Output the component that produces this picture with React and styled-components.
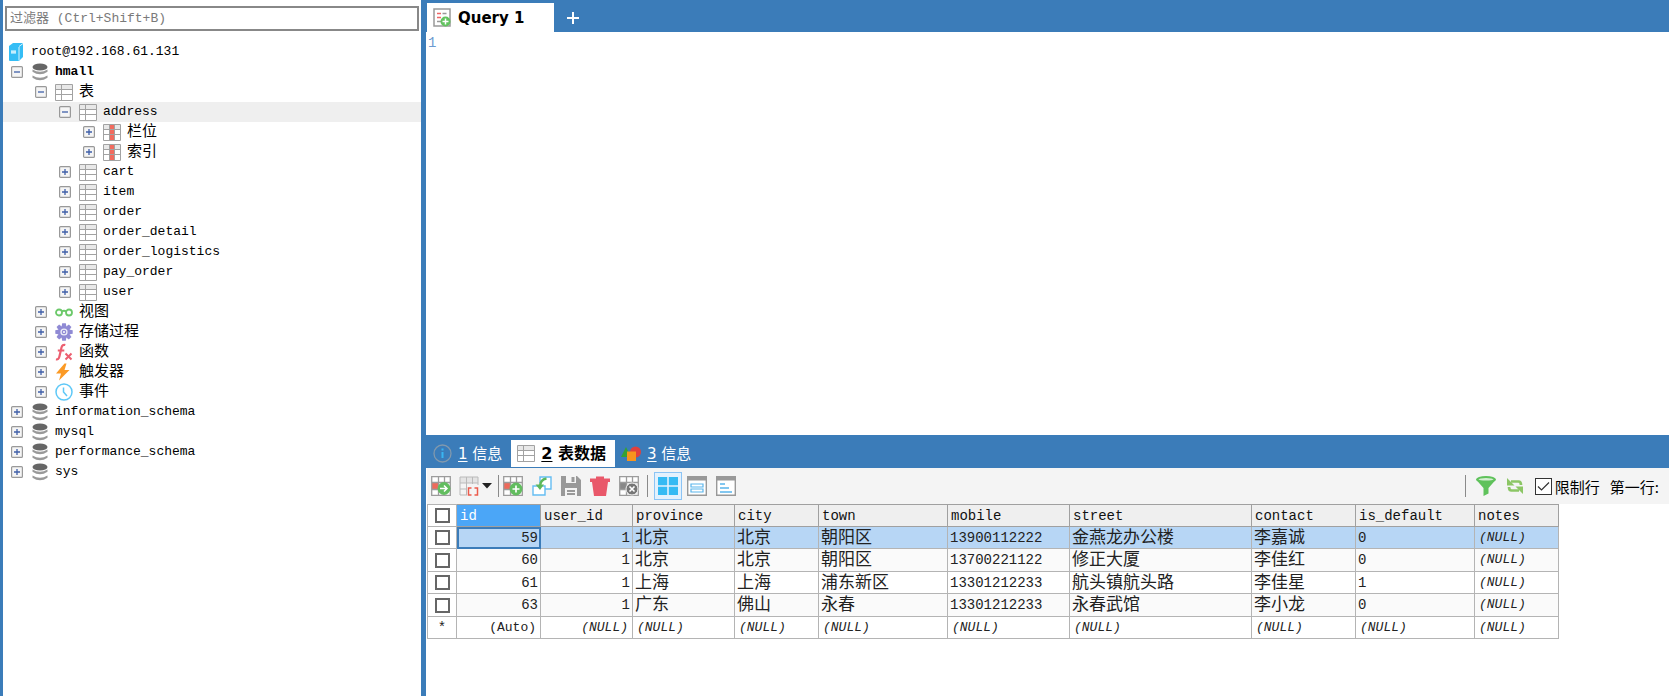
import React from 'react'
import styled, { createGlobalStyle, css } from 'styled-components'

const blue = '#3b7cb9'
const mono = "'Liberation Mono', 'Noto Sans CJK SC', monospace"
const sans = "'DejaVu Sans', 'Noto Sans CJK SC', sans-serif"

const GlobalStyle = createGlobalStyle`
  * {
    box-sizing: border-box;
  }
  body {
    margin: 0;
    color: #000;
    background: #fff;
    font-family: ${mono};
  }
  button {
    margin: 0;
    padding: 0;
    border: 0;
    background: none;
    color: inherit;
    font: inherit;
  }
`

const Root = styled.div`
  display: flex;
  height: 100vh;
  overflow: hidden;
`

/* object browser */

const Sidebar = styled.aside`
  flex: none;
  width: 426px;
  border-left: 3px solid ${blue};
  border-right: 5px solid ${blue};
`

const FilterInput = styled.input`
  display: block;
  width: calc(100% - 4px);
  height: 25px;
  margin: 6px 2px 11px;
  padding: 0 3px;
  border: 2px solid #888;
  outline: none;
  font-family: ${mono};
  font-size: 13px;

  &::placeholder {
    color: #7a7a7a;
    opacity: 1;
  }
`

const Tree = styled.ul`
  margin: 0;
  padding: 0;
  list-style: none;
`

const TreeRow = styled.li`
  display: flex;
  align-items: center;
  height: 20px;
  padding-left: ${p => (p.$root ? 3 : 8 + p.$level * 24)}px;
  background: ${p => (p.$selected ? '#efefef' : 'transparent')};
`

const Toggle = styled.button`
  display: flex;
  width: 12px;
  height: 12px;
  margin-right: 7px;
`

const TreeIcon = styled.span`
  display: flex;
  justify-content: center;
  width: 20px;
  margin-right: 5px;
`

const TreeName = styled.span`
  padding-top: ${p => (p.$cjk ? 2 : 0)}px;
  font-size: ${p => (p.$cjk ? 15 : 13)}px;
  font-weight: ${p => (p.$bold ? 700 : 400)};
  line-height: 20px;
`

/* query and result panes */

const Main = styled.main`
  display: flex;
  flex: 1;
  flex-direction: column;
  min-width: 0;
  padding-left: 1px;
`

const TabBar = styled.div`
  display: flex;
  align-items: flex-end;
  flex: none;
  margin-left: -1px;
  padding: ${p => (p.$result ? '5px 0 1px 1px' : '3px 0 0 1px')};
  background: ${blue};
  font-family: ${sans};
`

const Tab = styled.button`
  display: flex;
  align-items: center;
  gap: 6px;
  height: ${p => (p.$tall ? 29 : 27)}px;
  padding: 0 8px 0 6px;
  color: #fff;
  font-size: 15px;
  line-height: 20px;

  ${p =>
    p.$active &&
    css`
      background: #fff;
      color: #000;
      font-weight: 700;
    `}

  u {
    text-underline-offset: 2px;
  }
`

const QueryTab = styled(Tab)`
  width: 127px;
  gap: 7px;
`

const ResultTab = styled(Tab)`
  padding-right: 9px;
  font-size: ${p => (p.$active ? 16 : 15)}px;
`

const AddTab = styled.button`
  display: flex;
  margin: 0 0 7px 12px;
`

const Editor = styled.div`
  display: flex;
  flex: 1;
  min-height: 0;
`

const LineNumber = styled.span`
  padding: 1px;
  color: #6c9ad0;
  font-size: 14px;
  line-height: 20px;
`

const SqlArea = styled.textarea`
  flex: 1;
  padding: 1px 2px;
  border: 0;
  outline: none;
  resize: none;
  font-family: ${mono};
  font-size: 14px;
  line-height: 20px;
`

const Toolbar = styled.div`
  display: flex;
  align-items: center;
  flex: none;
  height: 36px;
  padding-right: 10px;
  background: #f4f4f4;
  font-family: 'Noto Sans CJK SC', sans-serif;
  font-size: 15px;
`

const ToolButton = styled.button`
  display: flex;
  align-items: center;
  justify-content: center;
  width: 28px;
  height: 28px;
  margin-right: 1px;
  border: 1px solid ${p => (p.$active ? '#8cc4f5' : 'transparent')};
  background: ${p => (p.$active ? '#e3f1fd' : 'transparent')};
`

const MenuButton = styled(ToolButton)`
  width: 38px;
  gap: 3px;
`

const Separator = styled.span`
  width: 1px;
  height: 22px;
  margin: 0 ${p => (p.$wide ? 6 : 0)}px 0 3px;
  background: #8a8a8a;
`

const Spacer = styled.span`
  flex: 1;
`

const LimitLabel = styled.label`
  display: flex;
  align-items: center;
  gap: 3px;
  margin: 0 10px 0 5px;
`

const LimitBox = styled.input`
  width: 17px;
  height: 17px;
  margin: 0;
  border: 1px solid #333;
  appearance: none;
  background: #fff
    url("data:image/svg+xml,%3Csvg xmlns='http://www.w3.org/2000/svg' viewBox='0 0 15 15'%3E%3Cpath d='M2 7.5l3.5 3.5L13 3.5' fill='none' stroke='%23333' stroke-width='1.2'/%3E%3C/svg%3E");
`

const GridWrap = styled.div`
  flex: none;
  min-height: 192px;
  overflow: hidden;
`

const Grid = styled.table`
  width: 1131px;
  table-layout: fixed;
  border-collapse: collapse;
  font-size: 15px;
  line-height: 18px;
`

const HeadCell = styled.th`
  height: 22px;
  padding: 0 3px;
  border: 1px solid #a0a0a0;
  background: ${p => (p.$active ? '#4ba6f7' : '#efefef')};
  color: ${p => (p.$active ? '#fff' : '#111')};
  font-size: 14px;
  font-weight: 400;
  text-align: left;
`

const Cell = styled.td`
  padding: ${p => (p.$cjk ? '2px 2px 0' : '0 2px')};
  border: 1px solid #b4b4b4;
  color: #222;
  font-size: ${p => (p.$cjk ? 17 : 14)}px;
  text-align: ${p => (p.$right ? 'right' : 'left')};
  white-space: nowrap;

  ${p =>
    p.$focused &&
    css`
      outline: 2px solid ${blue};
      outline-offset: -2px;
    `}
`

const CheckCell = styled(Cell)`
  padding: 0;
  background: #fff;
  text-align: center;
`

const EmptyCell = styled(Cell)`
  padding: 0 4px;
  font-size: 13px;
  font-style: ${p => (p.$plain ? 'normal' : 'italic')};
`

const Row = styled.tr`
  height: 22px;
  background: ${p => (p.$selected ? '#b7d6f5' : '#fff')};

  &:nth-child(even) {
    height: 23px;
    background: #fafafa;
  }
`

const NewRow = styled(Row)`
  &&:nth-child(n) {
    background: #fff;
  }
`

const CheckBox = styled.input`
  display: block;
  width: 15px;
  height: 15px;
  margin: 0 auto;
  border: 2px solid #666;
  appearance: none;
  background: #fff;
`

/* icons */

const ToggleIcon = ({ open }) => (
  <svg width="12" height="12" viewBox="0 0 12 12">
    <rect x=".6" y=".6" width="10.800" height="10.800" rx="1" fill="#f5f5f5" stroke="#999" strokeWidth="1.200" />
    <path d={open ? 'M3 6h6' : 'M3 6h6M6 3v6'} stroke="#3f5fa8" strokeWidth="1.300" />
  </svg>
)

const ServerIcon = () => (
  <svg width="16" height="20" viewBox="0 0 16 20">
    <path d="M1 4l4-3h10v14l-4 4H2q-1 0-1-1z" fill="#34bdf5" />
    <path d="M11 4.500l4-3M11 5v13.500" stroke="#d9f3fd" strokeWidth="1" />
    <path d="M3 8h5v4H3z" fill="#8eddfb" />
    <path d="M3 10h5" stroke="#fff" />
  </svg>
)

const DatabaseIcon = () => (
  <svg width="16" height="18" viewBox="0 0 16 18">
    <ellipse cx="8" cy="4" rx="7.500" ry="3.600" fill="#666" />
    <path d="M.5 6.500q7.500 4.500 15 0v2.200q-7.500 5-15 0zM.5 12.500q7.500 4.500 15 0v2.200q-7.500 5-15 0z" fill="#999" />
  </svg>
)

const TableIcon = ({ accent }) => (
  <svg width="18" height="17" viewBox="0 0 18 17">
    <path d="M.5.500h17v16H.5z" fill="#fff" />
    <path d="M1 1h16v4H1z" fill="#e8e8e8" />
    {accent && <path d="M6 1h5v15H6z" fill="#f26b5e" />}
    <path
      d={`M.5.500h17v16H.5zM.5 5.500h17M.5 10.500h17M6.500.500v16${accent ? 'M11.500.500v16' : ''}`}
      fill="none"
      stroke="#a2a2a2"
    />
  </svg>
)

const GlassesIcon = () => (
  <svg width="18" height="10" viewBox="0 0 18 10" fill="none" stroke="#6cc96a" strokeWidth="1.800">
    <circle cx="4" cy="5.500" r="3" />
    <circle cx="14" cy="5.500" r="3" />
    <path d="M6.500 4.500q2.500-1.500 5 0" />
  </svg>
)

const GearIcon = () => (
  <svg width="18" height="18" viewBox="0 0 18 18">
    <g fill="#8f8ad4">
      {[0, 45, 90, 135].map(a => (
        <path key={a} d="M7.200.300h3.600l.7 4v9.400l-.7 4H7.200l-.7-4V4.300z" transform={`rotate(${a} 9 9)`} />
      ))}
    </g>
    <circle cx="9" cy="9" r="3.600" fill="#fff" opacity=".85" />
    <circle cx="9" cy="9" r="2.300" fill="#8f8ad4" />
    <circle cx="9" cy="9" r="1" fill="#fff" />
  </svg>
)

const FunctionIcon = () => (
  <svg width="18" height="18" viewBox="0 0 18 18" fill="none" stroke="#ec5f70">
    <path d="M1 16.200q2.600.8 3.400-2.700L6.500 4.500q.8-3.300 3.800-2.500M2.800 7.500h6.500" strokeWidth="2.200" />
    <path d="M10.500 10.500l6 6M16.500 10.500l-6 6" strokeWidth="2" />
  </svg>
)

const BoltIcon = () => (
  <svg width="18" height="18" viewBox="0 0 18 18">
    <path d="M9.500.500L1 10.500h5L4 17.500 14.500 7H9.500l2-6.500z" fill="#fb9a25" />
  </svg>
)

const ClockIcon = () => (
  <svg width="18" height="18" viewBox="0 0 18 18" fill="none" stroke="#5ec8f7" strokeWidth="1.500">
    <circle cx="9" cy="9" r="8" />
    <path d="M8.500 4.500V9l3.500 4" />
  </svg>
)

const QueryIcon = () => (
  <svg width="18" height="19" viewBox="0 0 18 19">
    <path d="M1 1h16v17H1z" fill="#fff" stroke="#999" strokeWidth="1.500" />
    <path d="M4 5.500h4M4 9.500h4" stroke="#e66" strokeWidth="1.400" />
    <path d="M9.500 5.500h4M4 13.500h4" stroke="#999" strokeWidth="1.400" />
    <circle cx="12.500" cy="13.500" r="5" fill="#62c35f" />
    <path d="M12.500 10.500v6M9.500 13.500h6" stroke="#fff" strokeWidth="1.500" />
  </svg>
)

const PlusIcon = () => (
  <svg width="14" height="14" viewBox="0 0 14 14">
    <path d="M7 1v12M1 7h12" stroke="#fff" strokeWidth="2" />
  </svg>
)

const InfoIcon = () => (
  <svg width="19" height="19" viewBox="0 0 19 19" fill="none">
    <circle cx="9.500" cy="9.500" r="8.500" stroke="#8299ad" strokeWidth="1.300" />
    <path d="M9.500 8v6M9.500 4.500v2" stroke="#39b5f2" strokeWidth="2" />
  </svg>
)

const ShapesIcon = () => (
  <svg width="20" height="16" viewBox="0 0 20 16">
    <path d="M0 11L5 1l5 10z" fill="#35a135" />
    <circle cx="14.500" cy="6" r="5.500" fill="#e0403d" />
    <path d="M6 5.500h9V15H6z" fill="#f7941d" />
  </svg>
)

const RowsBase = ({ fill = '#ee6a5b' }) => (
  <>
    <path d="M.7.700h18.600v18.600H.7z" fill="#fff" />
    <path d="M1 6.500h7v7H1z" fill={fill} />
    <path
      d="M.7.700h18.600v18.600H.7zM.7 6.500h18.600M.7 13.500h8M7.500.700v18.600M13.500.700v6"
      fill="none"
      stroke="#9c9c9c"
      strokeWidth="1.300"
    />
  </>
)

const RowGoIcon = () => (
  <svg width="20" height="20" viewBox="0 0 20 20">
    <RowsBase />
    <circle cx="13" cy="12.500" r="6.400" fill="#62bd5f" />
    <path d="M9 12.500h6.500M13 9.500l3 3-3 3" fill="none" stroke="#fff" strokeWidth="1.500" />
  </svg>
)

const RowAddIcon = () => (
  <svg width="20" height="20" viewBox="0 0 20 20">
    <RowsBase />
    <circle cx="13" cy="13" r="6.400" fill="#62bd5f" />
    <path d="M13 9.500v7M9.500 13h7" stroke="#fff" strokeWidth="1.700" />
  </svg>
)

const TemplateIcon = () => (
  <svg width="20" height="20" viewBox="0 0 20 20" fill="none">
    <path d="M1 1h18v6H1z" fill="#e4e4e4" />
    <path d="M8 19H1V1h18v8M1 7h18M1 13h7M7.500 1v18M13.500 1v7" stroke="#bababa" />
    <path d="M12.500 12H9.500v7h3M15.500 12h3v7h-3" stroke="#ec5b4c" strokeWidth="1.500" />
  </svg>
)

const CaretIcon = () => (
  <svg width="10" height="6" viewBox="0 0 10 6">
    <path d="M0 0h10L5 5.500z" fill="#222" />
  </svg>
)

const CopyRowIcon = () => (
  <svg width="20" height="20" viewBox="0 0 20 20" fill="none">
    <path d="M8 7V1h11v12H8" fill="#fff" stroke="#64bdf2" strokeWidth="1.400" />
    <path d="M1 10h12v9H1z" fill="#fff" stroke="#64bdf2" strokeWidth="1.400" />
    <path d="M14.500 2.500Q8 3.500 8 11" stroke="#5cb85a" strokeWidth="2.400" />
    <path d="M3.500 8.500h8.500L8 14z" fill="#5cb85a" />
  </svg>
)

const SaveIcon = () => (
  <svg width="20" height="20" viewBox="0 0 20 20">
    <path d="M0 0h16l4 4v16H0z" fill="#999" />
    <path d="M5 0h10v7H5zM4 12h12v8H4z" fill="#f4f4f4" />
    <path d="M10.500 1h3v5h-3zM6 14h8v2H6zM6 17h8v2H6z" fill="#999" />
  </svg>
)

const TrashIcon = () => (
  <svg width="20" height="20" viewBox="0 0 20 20">
    <path d="M0 2.500h6V.5h8v2h6V6h-2l-2 14H4L2 6H0z" fill="#e9586a" />
  </svg>
)

const RowCancelIcon = () => (
  <svg width="20" height="20" viewBox="0 0 20 20">
    <RowsBase fill="#888" />
    <circle cx="13" cy="13" r="6" fill="#777" stroke="#eee" />
    <path d="M10.500 10.500l5 5M15.500 10.500l-5 5" stroke="#fff" strokeWidth="1.600" />
  </svg>
)

const GridIcon = () => (
  <svg width="20" height="18" viewBox="0 0 20 18">
    <path d="M0 0h9.200v8.200H0zM10.800 0H20v8.200h-9.200zM0 9.800h9.200V18H0zM10.800 9.800H20V18h-9.200z" fill="#35baf3" />
  </svg>
)

const FormIcon = () => (
  <svg width="20" height="20" viewBox="0 0 20 20">
    <path d="M.7.700h18.600v18.600H.7z" fill="#fff" stroke="#999" strokeWidth="1.400" />
    <path d="M0 0h20v4.500H0z" fill="#999" />
    <path d="M4 8h12v3H4zM4 13h12v3H4z" fill="none" stroke="#5ab5ec" strokeWidth="1.200" />
  </svg>
)

const TextIcon = () => (
  <svg width="20" height="20" viewBox="0 0 20 20">
    <path d="M.7.700h18.600v18.600H.7z" fill="#fff" stroke="#999" strokeWidth="1.400" />
    <path d="M0 0h20v4.500H0z" fill="#999" />
    <path d="M4 8h5M4 12h9M4 16h12" stroke="#5ab5ec" strokeWidth="1.400" />
  </svg>
)

const FunnelIcon = () => (
  <svg width="20" height="20" viewBox="0 0 20 20">
    <path d="M0 3.500L7.500 12v8l5-2.500V12L20 3.500z" fill="#5fc25b" />
    <ellipse cx="10" cy="3.500" rx="10" ry="3.500" fill="#5fc25b" />
    <ellipse cx="10" cy="3.300" rx="7.500" ry="1.300" fill="#d5eed3" />
  </svg>
)

const RefreshIcon = () => (
  <svg width="18" height="18" viewBox="0 0 18 18">
    <path d="M5 4.500h7.500Q15 4.500 15 8M13 13.500H5.500Q3 13.500 3 10" fill="none" stroke="#8cc665" strokeWidth="2.700" />
    <path d="M1 1v7.500h7.500zM17 17V9.500H9.500z" fill="#8cc665" />
  </svg>
)

const treeIcons = {
  server: <ServerIcon />,
  database: <DatabaseIcon />,
  table: <TableIcon />,
  column: <TableIcon accent />,
  view: <GlassesIcon />,
  procedure: <GearIcon />,
  func: <FunctionIcon />,
  trigger: <BoltIcon />,
  event: <ClockIcon />,
}

const nodes = [
  { name: 'root@192.168.61.131', icon: 'server', root: true },
  { name: 'hmall', icon: 'database', level: 0, open: true, bold: true },
  { name: '表', icon: 'table', level: 1, open: true, cjk: true },
  { name: 'address', icon: 'table', level: 2, open: true, selected: true },
  { name: '栏位', icon: 'column', level: 3, cjk: true },
  { name: '索引', icon: 'column', level: 3, cjk: true },
  { name: 'cart', icon: 'table', level: 2 },
  { name: 'item', icon: 'table', level: 2 },
  { name: 'order', icon: 'table', level: 2 },
  { name: 'order_detail', icon: 'table', level: 2 },
  { name: 'order_logistics', icon: 'table', level: 2 },
  { name: 'pay_order', icon: 'table', level: 2 },
  { name: 'user', icon: 'table', level: 2 },
  { name: '视图', icon: 'view', level: 1, cjk: true },
  { name: '存储过程', icon: 'procedure', level: 1, cjk: true },
  { name: '函数', icon: 'func', level: 1, cjk: true },
  { name: '触发器', icon: 'trigger', level: 1, cjk: true },
  { name: '事件', icon: 'event', level: 1, cjk: true },
  { name: 'information_schema', icon: 'database', level: 0 },
  { name: 'mysql', icon: 'database', level: 0 },
  { name: 'performance_schema', icon: 'database', level: 0 },
  { name: 'sys', icon: 'database', level: 0 },
]

const columns = [
  { key: 'id', width: 84, right: true },
  { key: 'user_id', width: 92, right: true },
  { key: 'province', width: 102, cjk: true },
  { key: 'city', width: 84, cjk: true },
  { key: 'town', width: 129, cjk: true },
  { key: 'mobile', width: 122 },
  { key: 'street', width: 182, cjk: true },
  { key: 'contact', width: 104, cjk: true },
  { key: 'is_default', width: 119 },
  { key: 'notes', width: 84 },
]

const rows = [
  [59, 1, '北京', '北京', '朝阳区', '13900112222', '金燕龙办公楼', '李嘉诚', 0, null],
  [60, 1, '北京', '北京', '朝阳区', '13700221122', '修正大厦', '李佳红', 0, null],
  [61, 1, '上海', '上海', '浦东新区', '13301212233', '航头镇航头路', '李佳星', 1, null],
  [63, 1, '广东', '佛山', '永春', '13301212233', '永春武馆', '李小龙', 0, null],
]

const ObjectBrowser = () => (
  <Sidebar>
    <FilterInput aria-label="过滤器" placeholder="过滤器 (Ctrl+Shift+B)" />
    <Tree>
      {nodes.map(node => (
        <TreeRow key={node.name} $root={node.root} $level={node.level} $selected={node.selected}>
          {!node.root && (
            <Toggle aria-label={node.name} aria-expanded={!!node.open}>
              <ToggleIcon open={node.open} />
            </Toggle>
          )}
          <TreeIcon>{treeIcons[node.icon]}</TreeIcon>
          <TreeName $cjk={node.cjk} $bold={node.bold}>
            {node.name}
          </TreeName>
        </TreeRow>
      ))}
    </Tree>
  </Sidebar>
)

const ResultToolbar = () => (
  <Toolbar>
    <ToolButton aria-label="export"><RowGoIcon /></ToolButton>
    <MenuButton aria-label="template">
      <TemplateIcon />
      <CaretIcon />
    </MenuButton>
    <Separator />
    <ToolButton aria-label="add row"><RowAddIcon /></ToolButton>
    <ToolButton aria-label="duplicate row"><CopyRowIcon /></ToolButton>
    <ToolButton aria-label="save"><SaveIcon /></ToolButton>
    <ToolButton aria-label="delete row"><TrashIcon /></ToolButton>
    <ToolButton aria-label="cancel changes"><RowCancelIcon /></ToolButton>
    <Separator $wide />
    <ToolButton $active aria-label="grid view"><GridIcon /></ToolButton>
    <ToolButton aria-label="form view"><FormIcon /></ToolButton>
    <ToolButton aria-label="text view"><TextIcon /></ToolButton>
    <Spacer />
    <Separator $wide />
    <ToolButton aria-label="filter"><FunnelIcon /></ToolButton>
    <ToolButton aria-label="refresh"><RefreshIcon /></ToolButton>
    <LimitLabel>
      <LimitBox type="checkbox" defaultChecked />
      限制行
    </LimitLabel>
    <span>第一行:</span>
  </Toolbar>
)

const ResultGrid = () => (
  <GridWrap>
    <Grid>
      <colgroup>
        <col width="29" />
        {columns.map(c => (
          <col key={c.key} width={c.width} />
        ))}
      </colgroup>
      <thead>
        <tr>
          <CheckCell as="th">
            <CheckBox type="checkbox" aria-label="all rows" />
          </CheckCell>
          {columns.map((c, i) => (
            <HeadCell key={c.key} $active={i === 0}>
              {c.key}
            </HeadCell>
          ))}
        </tr>
      </thead>
      <tbody>
        {rows.map((row, r) => (
          <Row key={row[0]} $selected={r === 0}>
            <CheckCell>
              <CheckBox type="checkbox" aria-label={`row ${row[0]}`} />
            </CheckCell>
            {columns.map((c, i) =>
              row[i] === null ? (
                <EmptyCell key={c.key}>(NULL)</EmptyCell>
              ) : (
                <Cell key={c.key} $right={c.right} $cjk={c.cjk} $focused={r === 0 && i === 0}>
                  {row[i]}
                </Cell>
              )
            )}
          </Row>
        ))}
        <NewRow>
          <CheckCell>*</CheckCell>
          {columns.map((c, i) => (
            <EmptyCell key={c.key} $right={c.right} $plain={i === 0}>
              {i === 0 ? '(Auto)' : '(NULL)'}
            </EmptyCell>
          ))}
        </NewRow>
      </tbody>
    </Grid>
  </GridWrap>
)

const App = () => (
  <>
    <GlobalStyle />
    <Root>
      <ObjectBrowser />
      <Main>
        <TabBar>
          <QueryTab $active $tall>
            <QueryIcon />
            Query 1
          </QueryTab>
          <AddTab aria-label="new query">
            <PlusIcon />
          </AddTab>
        </TabBar>
        <Editor>
          <LineNumber>1</LineNumber>
          <SqlArea aria-label="SQL" />
        </Editor>
        <TabBar $result>
          <ResultTab>
            <InfoIcon />
            <span><u>1</u> 信息</span>
          </ResultTab>
          <ResultTab $active>
            <TableIcon />
            <span><u>2</u> 表数据</span>
          </ResultTab>
          <ResultTab>
            <ShapesIcon />
            <span><u>3</u> 信息</span>
          </ResultTab>
        </TabBar>
        <ResultToolbar />
        <ResultGrid />
      </Main>
    </Root>
  </>
)

export default App
